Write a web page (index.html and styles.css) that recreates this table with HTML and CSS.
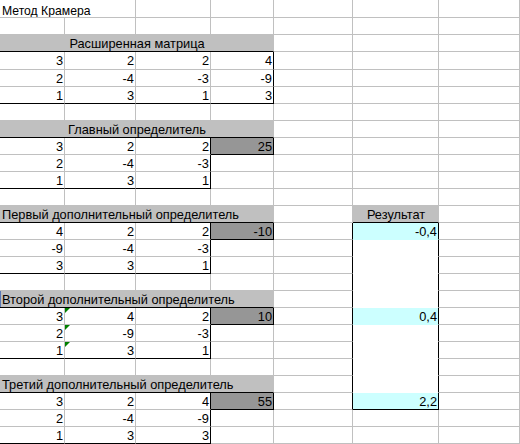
FILE: index.html
```html
<!DOCTYPE html>
<html lang="ru">
<head>
<meta charset="utf-8">
<title>Метод Крамера</title>
<link rel="stylesheet" href="styles.css">
</head>
<body>
<div class="sheet">
  <!-- row 1 -->
  <div class="c s2 title">Метод Крамера</div><div class="c"></div><div class="c"></div><div class="c"></div><div class="c"></div><div class="c"></div>
  <!-- row 2 -->
  <div class="c"></div><div class="c"></div><div class="c"></div><div class="c"></div><div class="c"></div><div class="c"></div><div class="c"></div>
  <!-- row 3 -->
  <div class="c s4 h ctr kb">Расширенная матрица</div><div class="c"></div><div class="c"></div><div class="c"></div>
  <!-- row 4 -->
  <div class="c n">3</div><div class="c n">2</div><div class="c n">2</div><div class="c n kr">4</div><div class="c"></div><div class="c"></div><div class="c"></div>
  <!-- row 5 -->
  <div class="c n">2</div><div class="c n">-4</div><div class="c n">-3</div><div class="c n kr">-9</div><div class="c"></div><div class="c"></div><div class="c"></div>
  <!-- row 6 -->
  <div class="c n kb">1</div><div class="c n kb">3</div><div class="c n kb">1</div><div class="c n kb kr">3</div><div class="c"></div><div class="c"></div><div class="c"></div>
  <!-- row 7 -->
  <div class="c"></div><div class="c"></div><div class="c"></div><div class="c"></div><div class="c"></div><div class="c"></div><div class="c"></div>
  <!-- row 8 -->
  <div class="c s4 h ctr kb">Главный определитель</div><div class="c"></div><div class="c"></div><div class="c"></div>
  <!-- row 9 -->
  <div class="c n">3</div><div class="c n">2</div><div class="c n kr">2</div><div class="c n dk">25</div><div class="c"></div><div class="c"></div><div class="c"></div>
  <!-- row 10 -->
  <div class="c n">2</div><div class="c n">-4</div><div class="c n kr">-3</div><div class="c"></div><div class="c"></div><div class="c"></div><div class="c"></div>
  <!-- row 11 -->
  <div class="c n kb">1</div><div class="c n kb">3</div><div class="c n kb kr">1</div><div class="c"></div><div class="c"></div><div class="c"></div><div class="c"></div>
  <!-- row 12 -->
  <div class="c"></div><div class="c"></div><div class="c"></div><div class="c"></div><div class="c"></div><div class="c"></div><div class="c"></div>
  <!-- row 13 -->
  <div class="c s4 h kb">Первый дополнительный определитель</div><div class="c"></div><div class="c h ctr kb">Результат</div><div class="c"></div>
  <!-- row 14 -->
  <div class="c n">4</div><div class="c n">2</div><div class="c n kr">2</div><div class="c n dk">-10</div><div class="c kr"></div><div class="c n cy kr">-0,4</div><div class="c"></div>
  <!-- row 15 -->
  <div class="c n">-9</div><div class="c n">-4</div><div class="c n kr">-3</div><div class="c"></div><div class="c kr"></div><div class="c bx kr"></div><div class="c"></div>
  <!-- row 16 -->
  <div class="c n kb">3</div><div class="c n kb">3</div><div class="c n kb kr">1</div><div class="c"></div><div class="c kr"></div><div class="c bx kr"></div><div class="c"></div>
  <!-- row 17 -->
  <div class="c"></div><div class="c"></div><div class="c"></div><div class="c"></div><div class="c kr"></div><div class="c bx kr"></div><div class="c"></div>
  <!-- row 18 -->
  <div class="c s4 h kb sel">Второй дополнительный определитель</div><div class="c kr"></div><div class="c bx kr"></div><div class="c"></div>
  <!-- row 19 -->
  <div class="c n">3</div><div class="c n tri">4</div><div class="c n kr">2</div><div class="c n dk">10</div><div class="c kr"></div><div class="c n cy kr">0,4</div><div class="c"></div>
  <!-- row 20 -->
  <div class="c n">2</div><div class="c n tri">-9</div><div class="c n kr">-3</div><div class="c"></div><div class="c kr"></div><div class="c bx kr"></div><div class="c"></div>
  <!-- row 21 -->
  <div class="c n kb">1</div><div class="c n kb tri">3</div><div class="c n kb kr">1</div><div class="c"></div><div class="c kr"></div><div class="c bx kr"></div><div class="c"></div>
  <!-- row 22 -->
  <div class="c"></div><div class="c"></div><div class="c"></div><div class="c"></div><div class="c kr"></div><div class="c bx kr"></div><div class="c"></div>
  <!-- row 23 -->
  <div class="c s4 h kb">Третий дополнительный определитель</div><div class="c kr"></div><div class="c bx kr"></div><div class="c"></div>
  <!-- row 24 -->
  <div class="c n">3</div><div class="c n">2</div><div class="c n kr">4</div><div class="c n dk">55</div><div class="c kr"></div><div class="c n cy kr kb">2,2</div><div class="c"></div>
  <!-- row 25 -->
  <div class="c n">2</div><div class="c n">-4</div><div class="c n kr">-9</div><div class="c"></div><div class="c"></div><div class="c"></div><div class="c"></div>
  <!-- row 26 -->
  <div class="c n kb">1</div><div class="c n kb">3</div><div class="c n kb kr">3</div><div class="c"></div><div class="c"></div><div class="c"></div><div class="c"></div>
</div>
</body>
</html>
```

FILE: styles.css
```css
html, body {
  margin: 0;
  padding: 0;
  background: #ffffff;
  overflow: hidden;
}

.sheet {
  display: grid;
  grid-template-columns: 65px 71px 75px 63px 79px 86px 81px;
  grid-template-rows: 18px 17px 17px 18px repeat(22, 17px);
  font-family: "Liberation Sans", Arial, sans-serif;
  font-size: 12.8px;
  line-height: 15px;
  color: #000000;
}

.c {
  box-sizing: border-box;
  border-right: 1px solid #c0c0c0;
  border-bottom: 1px solid #c0c0c0;
  padding: 1px 1px 0 2px;
  white-space: nowrap;
  overflow: hidden;
  position: relative;
}

.title {
  font-size: 12.2px;
  padding-top: 4px;
}

.s2 { grid-column: span 2; }
.s4 { grid-column: span 4; }

.n { text-align: right; }
.ctr { text-align: center; }

.h { background: #c0c0c0; }

.kb { border-bottom-color: #000000; }
.kr { border-right-color: #000000; }

.dk {
  background: #969696;
  border-right-color: #000000;
  border-bottom-color: #000000;
}

.cy {
  background: #ccffff;
  border-bottom-color: #ccffff;
}

.cy.kb { border-bottom-color: #000000; }

.bx { border-bottom-color: #ffffff; }

.sel { box-shadow: inset 1px 0 0 #5a7ab8; }

.tri::before {
  content: "";
  position: absolute;
  left: 0;
  top: 0;
  width: 0;
  height: 0;
  border-top: 5px solid #008000;
  border-right: 5px solid transparent;
}
```
